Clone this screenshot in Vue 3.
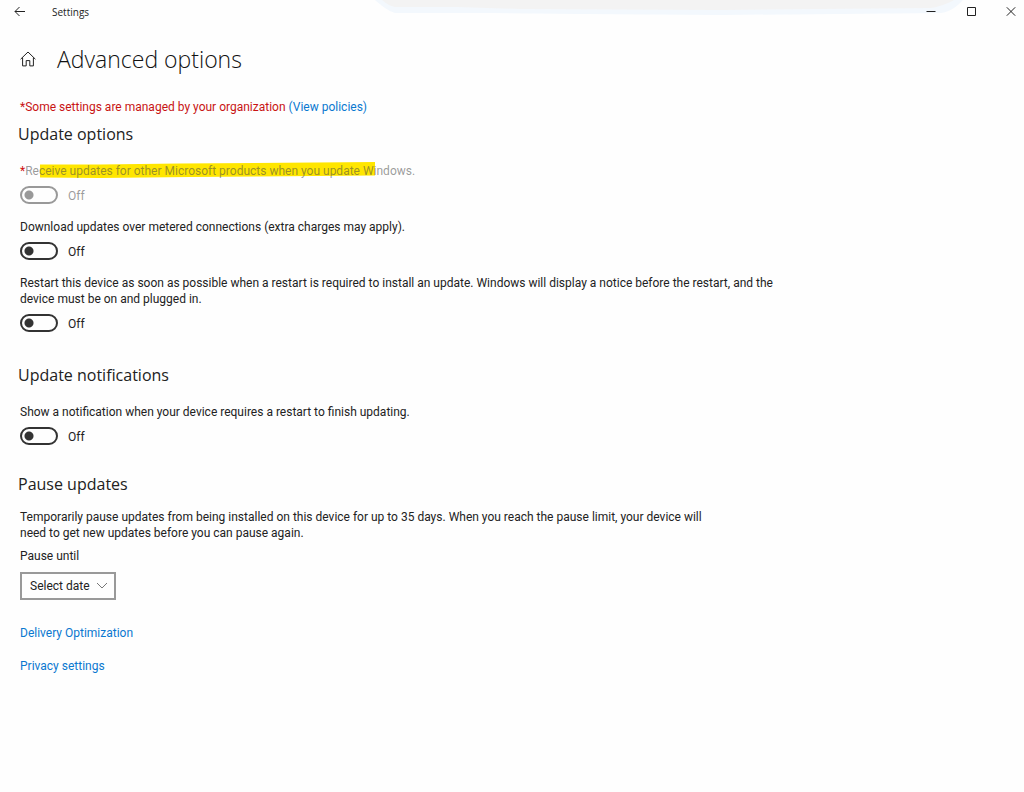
<script setup>
import { reactive, ref } from 'vue'

const updateOptions = reactive([
  { id: 'other', text: 'Receive updates for other Microsoft products when you update Windows.', on: false, managed: true },
  { id: 'metered', text: 'Download updates over metered connections (extra charges may apply).', on: false },
  {
    id: 'restart',
    text: 'Restart this device as soon as possible when a restart is required to install an update. Windows will display a notice before the restart, and the device must be on and plugged in.',
    on: false,
  },
])
const notify = reactive({ on: false })
const pauseDate = ref('Select date')
</script>

<template>
  <div class="window">
    <svg class="sketch" viewBox="0 0 600 16" aria-hidden="true">
      <path d="M4 0 C11 6 17 11 24 13 L120 13 L210 14 L350 15 L570 13 C578 12 586 7 592 0Z" fill="#f3f8fd" />
      <path d="M11 0 C16 4 19 6 24 7 L86 7 L150 9 L350 10 L560 8 C568 7 578 3 583 0Z" fill="#f3f3f3" />
    </svg>

    <header class="titlebar">
      <button class="icon-button back" type="button" aria-label="Back">
        <svg width="12" height="12" viewBox="0 0 12 12"><path d="M11 5.5H1M5.5 1L1 5.5l4.5 4.5" /></svg>
      </button>
      <span class="app-name">Settings</span>
      <div class="controls">
        <button class="icon-button" type="button" aria-label="Minimize">
          <svg width="10" height="10" viewBox="0 0 10 10"><path d="M0.5 4.5h9" /></svg>
        </button>
        <button class="icon-button" type="button" aria-label="Maximize">
          <svg width="10" height="10" viewBox="0 0 10 10"><path d="M1.5 0.5h8v8h-8z" /></svg>
        </button>
        <button class="icon-button" type="button" aria-label="Close">
          <svg width="10" height="10" viewBox="0 0 10 10"><path d="M0.8 0.3l8.4 8.4M9.2 0.3L0.8 8.7" /></svg>
        </button>
      </div>
    </header>

    <main>
      <div class="heading">
        <button class="icon-button home" type="button" aria-label="Home">
          <svg width="16" height="16" viewBox="0 0 16 16">
            <path d="M0.6 8.2L8 1l7.4 7.2M2.6 6.6v8.3h3.6V9.6h3.6v5.3h3.6V6.6" />
          </svg>
        </button>
        <h1>Advanced options</h1>
      </div>

      <p class="managed">*Some settings are managed by your organization <a href="#policies">(View policies)</a></p>

      <section>
        <h2>Update options</h2>
        <div v-for="option in updateOptions" :key="option.id" class="option" :class="{ disabled: option.managed }">
          <label class="description" :for="option.id">
            <svg v-if="option.managed" class="marker" viewBox="0 0 335 16" preserveAspectRatio="none" aria-hidden="true">
              <path d="M0 1.5L60 1.5 140 0.5 335 -1V12.5L150 14 60 15 0 14.5Z" fill="#ffe600" />
            </svg>
            <span v-if="option.managed" class="star">*</span><span class="label-text">{{ option.text }}</span>
          </label>
          <div class="toggle-row">
            <input :id="option.id" v-model="option.on" type="checkbox" role="switch" class="toggle" :disabled="option.managed" />
            <span class="state">{{ option.on ? 'On' : 'Off' }}</span>
          </div>
        </div>
      </section>

      <section class="notifications">
        <h2>Update notifications</h2>
        <div class="option">
          <label class="description" for="notify">Show a notification when your device requires a restart to finish updating.</label>
          <div class="toggle-row">
            <input id="notify" v-model="notify.on" type="checkbox" role="switch" class="toggle" />
            <span class="state">{{ notify.on ? 'On' : 'Off' }}</span>
          </div>
        </div>
      </section>

      <section class="pause">
        <h2>Pause updates</h2>
        <p class="pause-text">Temporarily pause updates from being installed on this device for up to 35 days. When you reach the pause limit, your device will need to get new updates before you can pause again.</p>
        <label class="pause-label" for="pause">Pause until</label>
        <div class="select-box">
          <select id="pause" v-model="pauseDate">
            <option>Select date</option>
          </select>
          <svg width="12" height="8" viewBox="0 0 12 8" aria-hidden="true"><path d="M1 1l5 5 5-5" /></svg>
        </div>
      </section>

      <nav class="links">
        <a href="#delivery">Delivery Optimization</a>
        <a href="#privacy">Privacy settings</a>
      </nav>
    </main>
  </div>
</template>

<style>
body {
  margin: 0;
  background: #fefefe;
}
</style>

<style scoped>
.window {
  position: relative;
  min-height: 100vh;
  color: #222;
  background: #fefefe;
  font: 12px/16px Roboto, "Open Sans", sans-serif;
}
.sketch {
  position: absolute;
  top: 0;
  left: 371px;
  width: 600px;
  height: 16px;
}
svg {
  display: block;
  fill: none;
  stroke: #222;
  stroke-width: 1;
}
.sketch,
.marker {
  stroke: none;
}
.titlebar {
  position: relative;
  display: flex;
  align-items: center;
  height: 24px;
  padding-left: 14px;
}
.icon-button {
  display: grid;
  place-items: center;
  padding: 0;
  border: 0;
  background: none;
}
.back {
  width: 12px;
  height: 22px;
}
.app-name {
  margin-left: 26px;
  font-size: 10px;
  font-family: "Open Sans", sans-serif;
}
.controls {
  display: flex;
  margin-left: auto;
}
.controls .icon-button {
  width: 26px;
  height: 22px;
  margin-left: 14px;
}
main {
  padding: 15px 20px 0;
}
.heading {
  display: flex;
  align-items: center;
  height: 40px;
}
.home {
  width: 16px;
  height: 20px;
}
h1,
h2,
p {
  margin: 0;
  font-weight: 400;
}
h1,
h2 {
  font-family: "Open Sans", "Noto Sans", sans-serif;
}
h1 {
  margin-left: 21px;
  color: #111;
  font-size: 23px;
  font-weight: 300;
  line-height: 40px;
}
h2 {
  margin-left: -2px;
  font-size: 16px;
  line-height: 24px;
}
.managed {
  margin: 20px 0 7px;
  color: #c81414;
}
a {
  color: #0a78d0;
  text-decoration: none;
}
.option {
  margin-top: 15px;
}
h2 + .option {
  margin-top: 17px;
}
.description {
  position: relative;
  display: block;
  max-width: 756px;
}
.label-text {
  position: relative;
}
.marker {
  position: absolute;
  top: 0;
  left: 20px;
  width: 335px;
  height: 16px;
  overflow: visible;
}
.star {
  color: #d01010;
}
.toggle-row {
  display: flex;
  align-items: center;
  gap: 10px;
  height: 18px;
  margin-top: 7px;
}
.state {
  padding-top: 2px;
}
.toggle {
  box-sizing: border-box;
  width: 38px;
  height: 18px;
  margin: 0;
  border: 2px solid #333;
  border-radius: 9px;
  appearance: none;
  background: radial-gradient(circle at 7px 7px, #333 4px, transparent 5px);
}
.toggle:checked {
  background: radial-gradient(circle at 27px 7px, #333 4px, transparent 5px);
}
.disabled .label-text,
.disabled .state {
  color: rgba(70, 70, 70, 0.55);
}
.disabled .toggle {
  border-color: #999;
  background: radial-gradient(circle at 7px 7px, #999 4px, transparent 5px);
}
.notifications {
  margin-top: 31px;
}
.pause {
  margin-top: 27px;
}
.pause-text {
  max-width: 704px;
  margin-top: 13px;
}
.pause-label {
  display: block;
  margin-top: 7px;
}
.select-box {
  position: relative;
  width: 96px;
  margin-top: 8px;
}
select {
  box-sizing: border-box;
  display: block;
  width: 100%;
  height: 28px;
  padding: 0 8px;
  border: 2px solid #999;
  border-radius: 0;
  appearance: none;
  color: inherit;
  background: #fefefe;
  font: inherit;
}
.select-box svg {
  position: absolute;
  top: 10px;
  right: 8px;
  stroke: #777;
  pointer-events: none;
}
.links {
  display: flex;
  flex-direction: column;
  align-items: flex-start;
  gap: 17px;
  margin-top: 25px;
}
</style>
